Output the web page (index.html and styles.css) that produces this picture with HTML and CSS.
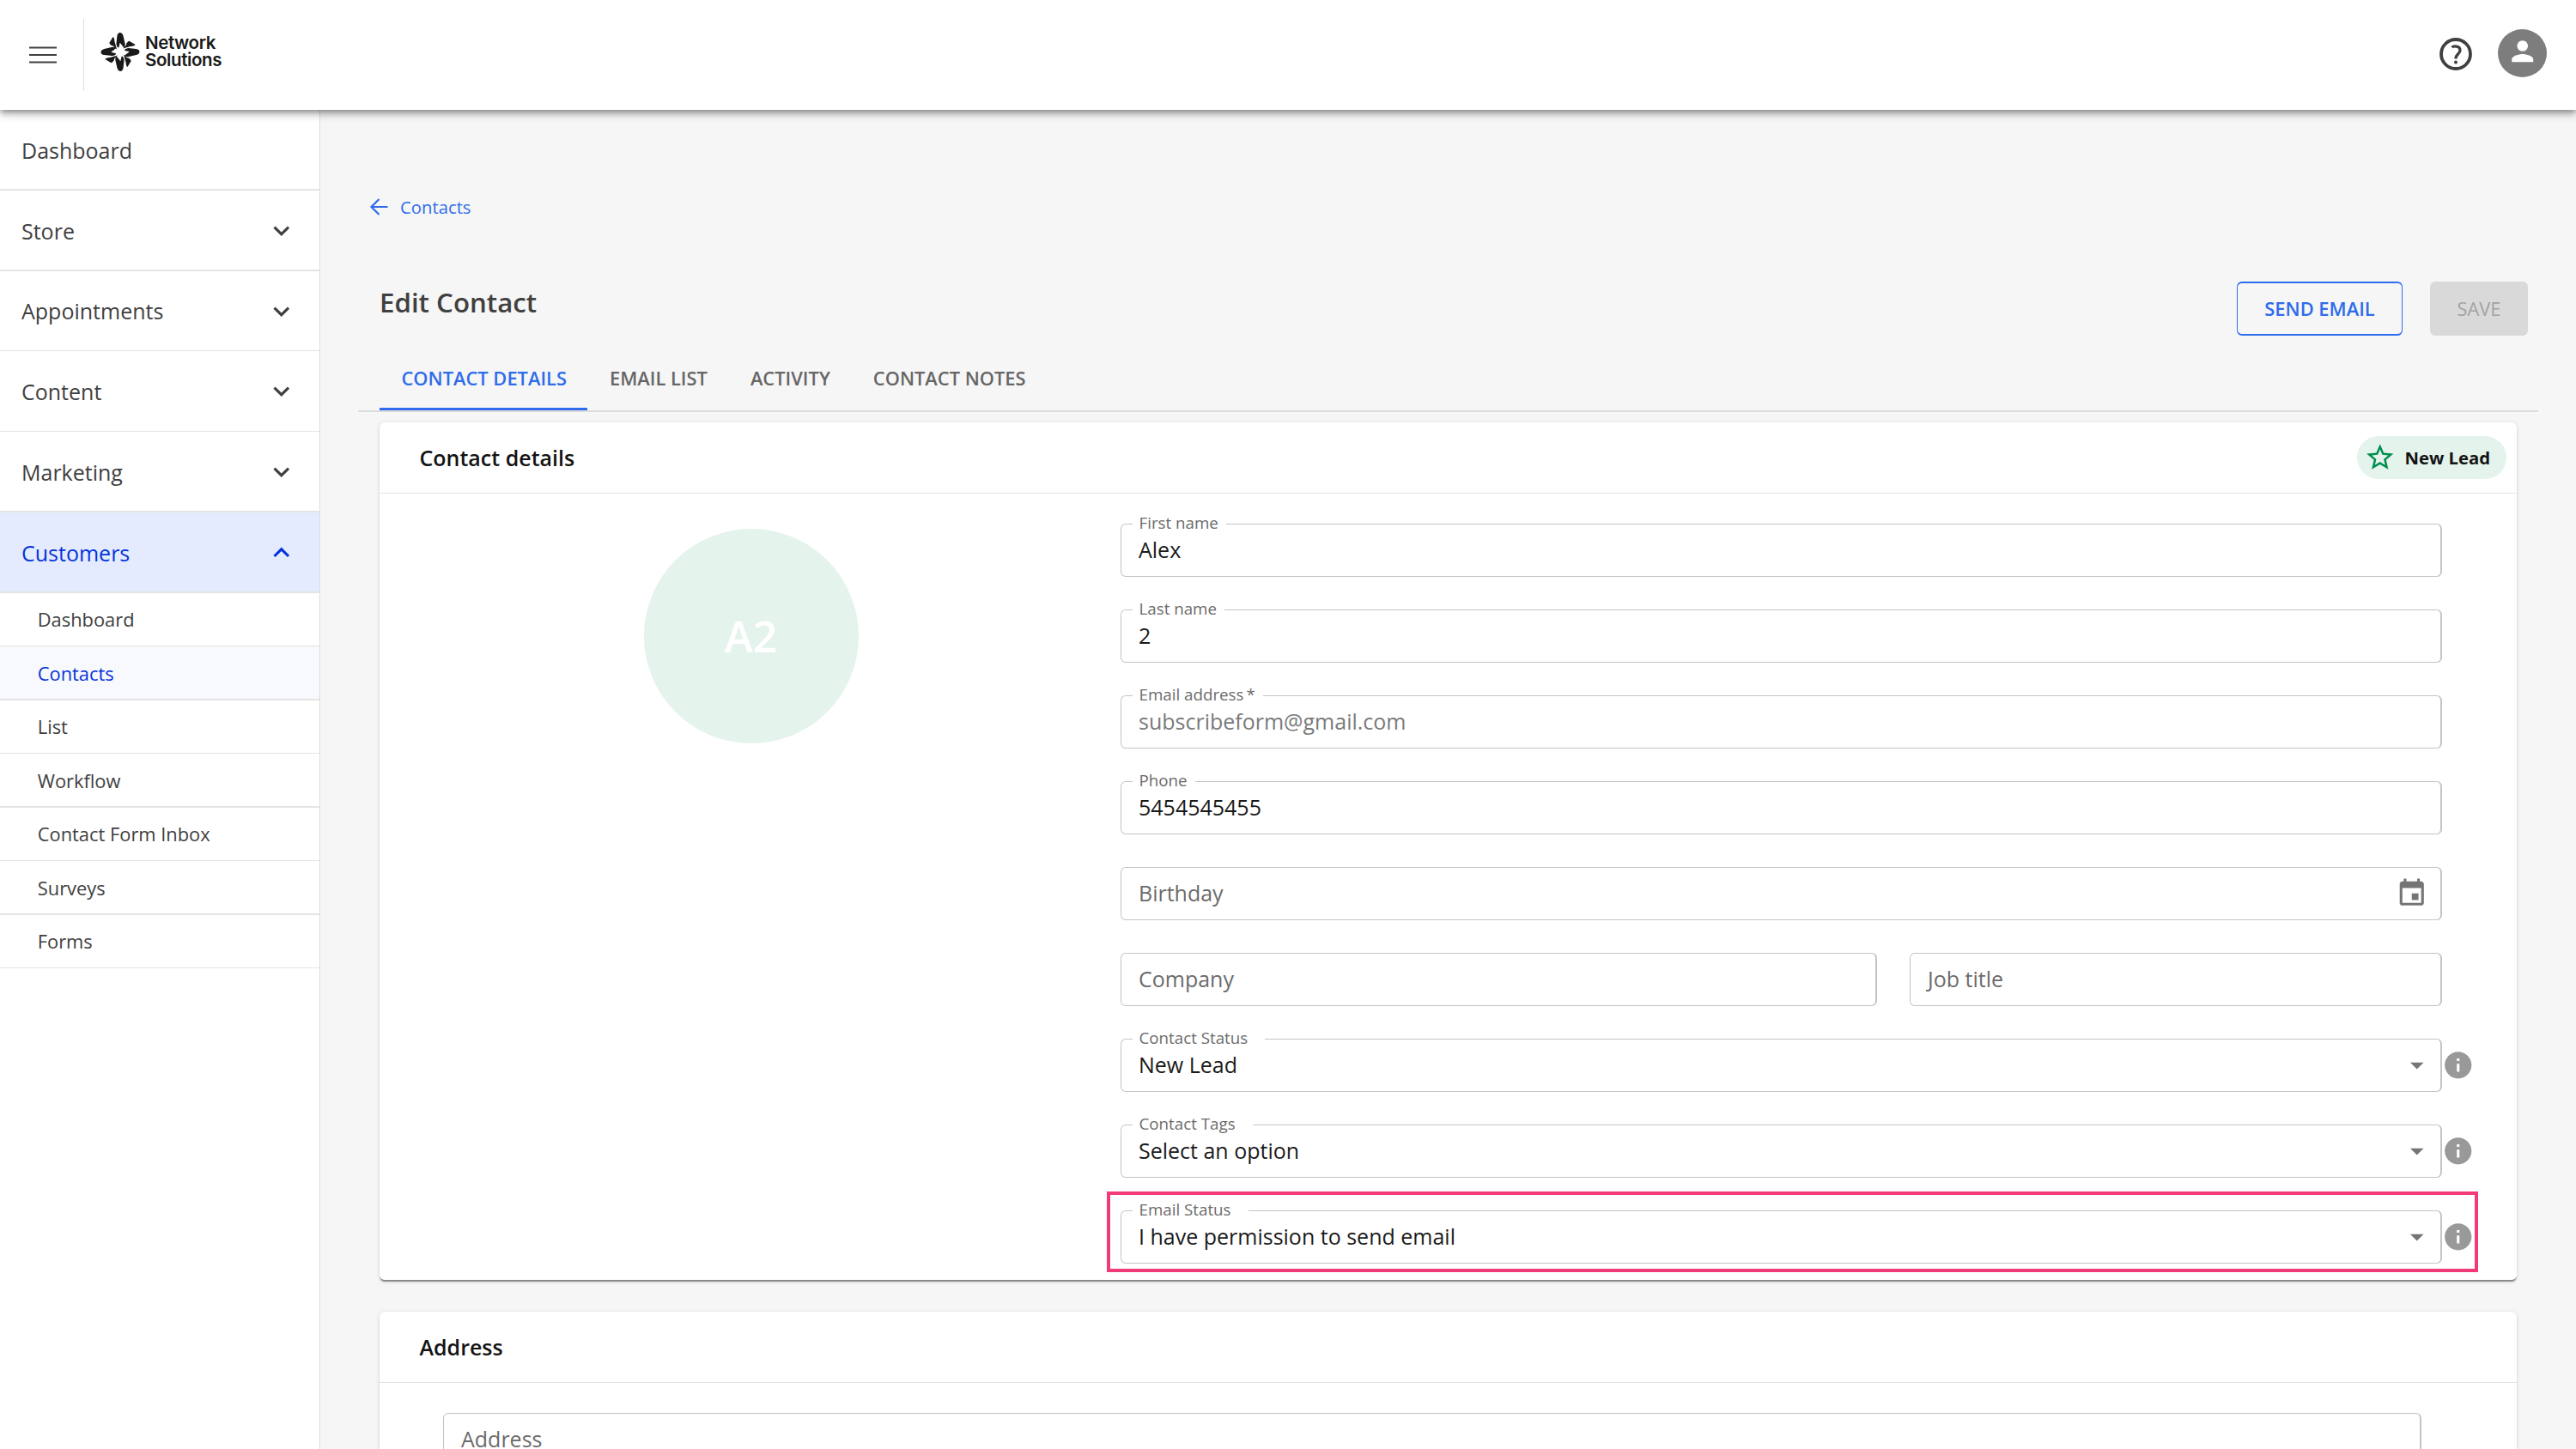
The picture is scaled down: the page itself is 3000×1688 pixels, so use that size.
FILE: index.html
```html
<!DOCTYPE html>
<html lang="en">
<head>
    <meta charset="UTF-8">
    <meta name="viewport" content="width=device-width, initial-scale=1.0">
    <title>Edit Contact</title>
    <link rel="stylesheet" href="styles.css">
</head>
<body>
    <header class="topbar">
        <button class="menu-btn" aria-label="Menu">
            <svg viewBox="0 0 32 20"><path d="M0 1.5h32M0 10h32M0 18.5h32" stroke="#404040" stroke-width="2" fill="none"/></svg>
        </button>
        <div class="brand">
            <svg class="brand-mark" viewBox="0 0 138 138">
                <defs>
                    <g id="petals">
                        <path d="M58 12C60-4 76-4 80 12L86 38Q88 50 82 54L68 36L64 54Q57 54 55 40Z"/>
                        <path d="M43 15Q48 17 49 32L57 60L45 48Q34 47 30 37Z"/>
                    </g>
                </defs>
                <g fill="#1a1a1a">
                    <use href="#petals"/>
                    <use href="#petals" transform="rotate(90 69 69)"/>
                    <use href="#petals" transform="rotate(180 69 69)"/>
                    <use href="#petals" transform="rotate(270 69 69)"/>
                </g>
            </svg>
            <div class="brand-name">Network<br>Solutions</div>
        </div>
        <div class="topbar-actions">
            <svg class="help-icon" viewBox="0 0 38 38"><circle cx="19" cy="19" r="17" fill="none" stroke="#404040" stroke-width="3.8"/><path d="M14.5 11.2c1.6-1.6 9.500-2.400 9.500 3.200 0 4.800-5.200 4.600-5.200 10.200" fill="none" stroke="#404040" stroke-width="3.300"/><circle cx="19" cy="28.600" r="2" fill="#404040"/></svg>
            <div class="user">
                <svg viewBox="0 0 24 24"><path fill="#fff" d="M12 12c2.210 0 4-1.790 4-4s-1.790-4-4-4-4 1.790-4 4 1.790 4 4 4zm0 2c-2.670 0-8 1.340-8 4v2h16v-2c0-2.660-5.330-4-8-4z"/></svg>
            </div>
        </div>
    </header>

    <div class="layout">
        <nav class="sidebar">
            <ul class="nav">
                <li><a class="nav-link">Dashboard</a></li>
                <li><a class="nav-link">Store <svg class="chevron" viewBox="0 0 24 24"><path d="M16.590 8.590 12 13.170 7.410 8.590 6 10l6 6 6-6z"/></svg></a></li>
                <li><a class="nav-link">Appointments <svg class="chevron" viewBox="0 0 24 24"><path d="M16.590 8.590 12 13.170 7.410 8.590 6 10l6 6 6-6z"/></svg></a></li>
                <li><a class="nav-link">Content <svg class="chevron" viewBox="0 0 24 24"><path d="M16.590 8.590 12 13.170 7.410 8.590 6 10l6 6 6-6z"/></svg></a></li>
                <li><a class="nav-link">Marketing <svg class="chevron" viewBox="0 0 24 24"><path d="M16.590 8.590 12 13.170 7.410 8.590 6 10l6 6 6-6z"/></svg></a></li>
                <li><a class="nav-link open">Customers <svg class="chevron" viewBox="0 0 24 24"><path d="M12 8l-6 6 1.410 1.410L12 10.830l4.590 4.580L18 14z"/></svg></a></li>
            </ul>
            <ul class="nav subnav">
                <li><a class="nav-link">Dashboard</a></li>
                <li><a class="nav-link active">Contacts</a></li>
                <li><a class="nav-link">List</a></li>
                <li><a class="nav-link">Workflow</a></li>
                <li><a class="nav-link">Contact Form Inbox</a></li>
                <li><a class="nav-link">Surveys</a></li>
                <li><a class="nav-link">Forms</a></li>
            </ul>
        </nav>

        <main class="content">
            <a class="back-link">
                <svg viewBox="0 0 21 20"><path d="M21 10H2M11 1L2 10l9 9" fill="none" stroke="currentColor" stroke-width="2.200"/></svg>
                Contacts
            </a>

            <div class="page-head">
                <h1>Edit Contact</h1>
                <div class="page-actions">
                    <button class="btn btn-outline">SEND EMAIL</button>
                    <button class="btn btn-disabled" disabled>SAVE</button>
                </div>
            </div>

            <div class="tabs">
                <a class="tab selected">CONTACT DETAILS</a>
                <a class="tab">EMAIL LIST</a>
                <a class="tab">ACTIVITY</a>
                <a class="tab">CONTACT NOTES</a>
            </div>

            <section class="card details">
                <div class="card-head">
                    <h2>Contact details</h2>
                    <div class="badge">
                        <svg viewBox="0 0 24 24"><path d="M22 9.240l-7.190-.62L12 2 9.190 8.630 2 9.240l5.460 4.730L5.820 21 12 17.270 18.180 21l-1.630-7.030L22 9.240zM12 15.400l-3.760 2.270 1-4.280-3.320-2.880 4.380-.38L12 6.100l1.710 4.040 4.380.38-3.320 2.880 1 4.280L12 15.400z"/></svg>
                        New Lead
                    </div>
                </div>
                <div class="card-body">
                    <div class="photo">
                        <div class="initials">A2</div>
                    </div>
                    <div class="fields">
                        <div class="field"><label>First name</label><span class="value">Alex</span></div>
                        <div class="field"><label>Last name</label><span class="value">2</span></div>
                        <div class="field"><label>Email address<span class="required">*</span></label><span class="value muted">subscribeform@gmail.com</span></div>
                        <div class="field"><label>Phone</label><span class="value">5454545455</span></div>
                        <div class="field">
                            <span class="value placeholder">Birthday</span>
                            <svg class="calendar" viewBox="0 0 24 24"><path d="M17 12h-5v5h5v-5zM16 1v2H8V1H6v2H5c-1.110 0-1.990.9-1.990 2L3 19c0 1.100.89 2 2 2h14c1.100 0 2-.9 2-2V5c0-1.100-.9-2-2-2h-1V1h-2zm3 18H5V8h14v11z"/></svg>
                        </div>
                        <div class="field-row">
                            <div class="field company"><span class="value placeholder">Company</span></div>
                            <div class="field job"><span class="value placeholder">Job title</span></div>
                        </div>
                        <div class="select-row">
                            <div class="field select"><label>Contact Status</label><span class="value">New Lead</span><svg class="arrow" viewBox="0 0 24 24"><path d="M7 10l5 5 5-5z"/></svg></div>
                            <svg class="info" viewBox="0 0 24 24"><path d="M12 2C6.480 2 2 6.480 2 12s4.480 10 10 10 10-4.480 10-10S17.520 2 12 2zm1 15h-2v-6h2v6zm0-8h-2V7h2v2z"/></svg>
                        </div>
                        <div class="select-row">
                            <div class="field select"><label>Contact Tags</label><span class="value">Select an option</span><svg class="arrow" viewBox="0 0 24 24"><path d="M7 10l5 5 5-5z"/></svg></div>
                            <svg class="info" viewBox="0 0 24 24"><path d="M12 2C6.480 2 2 6.480 2 12s4.480 10 10 10 10-4.480 10-10S17.520 2 12 2zm1 15h-2v-6h2v6zm0-8h-2V7h2v2z"/></svg>
                        </div>
                        <div class="select-row highlighted">
                            <div class="field select"><label>Email Status</label><span class="value">I have permission to send email</span><svg class="arrow" viewBox="0 0 24 24"><path d="M7 10l5 5 5-5z"/></svg></div>
                            <svg class="info" viewBox="0 0 24 24"><path d="M12 2C6.480 2 2 6.480 2 12s4.480 10 10 10 10-4.480 10-10S17.520 2 12 2zm1 15h-2v-6h2v6zm0-8h-2V7h2v2z"/></svg>
                        </div>
                    </div>
                </div>
            </section>

            <section class="card address">
                <div class="card-head">
                    <h2>Address</h2>
                </div>
                <div class="address-body">
                    <div class="field"><span class="value placeholder">Address</span></div>
                </div>
            </section>
        </main>
    </div>
</body>
</html>
```

FILE: styles.css
```css
*, *::after {
    box-sizing: border-box;
}
body {
    margin: 0;
    height: 1688px;
    overflow: hidden;
    font-family: 'Open Sans', 'Noto Sans', sans-serif;
    font-size: 25px;
    color: #404040;
    background-color: #f6f6f6;
}
h1, h2, ul {
    margin: 0;
    padding: 0;
}
svg {
    display: block;
    flex: none;
}

/* top bar */
.topbar {
    position: relative;
    z-index: 2;
    display: flex;
    align-items: center;
    height: 128px;
    background-color: #fff;
    box-shadow: 0 3px 6px -1px rgba(0, 0, 0, 0.3), 0 6px 8px rgba(0, 0, 0, 0.16), 0 2px 14px rgba(0, 0, 0, 0.12);
}
.menu-btn {
    width: 98px;
    height: 84px;
    padding: 0 0 0 34px;
    border: none;
    border-right: 1px solid #e0e0e0;
    background: none;
}
.menu-btn svg {
    width: 32px;
    height: 20px;
}
.brand {
    display: flex;
    align-items: center;
    gap: 6px;
    padding: 0 0 8px 19px;
}
.brand-mark {
    width: 46px;
    height: 45px;
}
.brand-name {
    font-family: Inter, 'Liberation Sans', sans-serif;
    font-size: 20.5px;
    font-weight: 600;
    line-height: 20px;
    letter-spacing: -0.4px;
    color: #1a1a1a;
}
.topbar-actions {
    display: flex;
    align-items: center;
    gap: 30px;
    margin-left: auto;
    padding: 0 34px 5px 0;
}
.help-icon {
    width: 38px;
    height: 38px;
    margin-top: 2px;
}
.user {
    display: flex;
    align-items: center;
    justify-content: center;
    width: 57px;
    height: 56px;
    border-radius: 50%;
    background-color: #7d7d7d;
}
.user svg {
    width: 37.5px;
    height: 37.5px;
    margin-bottom: 3px;
}

/* sidebar */
.layout {
    display: flex;
    height: 1560px;
    overflow: hidden;
}
.sidebar {
    width: 373px;
    padding-top: 0.125px;
    background-color: #fff;
    border-right: 1px solid #dcdcdc;
}
.nav {
    list-style: none;
}
.nav li::after {
    content: '';
    display: block;
    height: 1.5625px;
    background-color: #e4e4e4;
}
.nav-link {
    display: flex;
    align-items: center;
    justify-content: space-between;
    height: 92.1875px;
    padding: 1.5px 26px 0 25px;
}
.nav-link.open {
    color: #0433d9;
    background-color: #e5ebff;
}
.chevron {
    width: 37.5px;
    height: 37.5px;
    fill: currentColor;
}
.subnav .nav-link {
    height: 60.9375px;
    padding-top: 1px;
    padding-left: 43.75px;
    font-size: 21.875px;
}
.subnav .nav-link.active {
    color: #0433d9;
    background-color: #f8f9fc;
}

/* page header */
.content {
    flex: 1;
    padding: 96px 44px 0;
}
.back-link {
    display: flex;
    align-items: center;
    gap: 14px;
    height: 34px;
    padding-left: 13px;
    font-size: 20.3px;
    color: #2f6ceb;
}
.back-link svg {
    width: 22px;
    height: 20px;
    margin-bottom: 1px;
}
.page-head {
    display: flex;
    justify-content: space-between;
    margin: 70px 12px 0 25px;
}
.page-head h1 {
    margin-top: 2px;
    font-size: 31.25px;
    font-weight: 600;
    line-height: 44px;
}
.page-actions {
    display: flex;
    gap: 32px;
}
.btn {
    height: 63px;
    padding: 0;
    border: none;
    border-radius: 6px;
    font-family: inherit;
    font-size: 21.875px;
    font-weight: 600;
}
.btn-outline {
    width: 193px;
    border: 2px solid #2f6ceb;
    border-width: 2px 1px;
    background: none;
    color: #2f6ceb;
}
.btn-disabled {
    width: 114px;
    background-color: #d9d9d9;
    color: #a3a3a3;
    font-weight: 400;
}
.tabs {
    display: flex;
    height: 89px;
    padding-left: 25px;
    border-bottom: 2px solid #dcdcdc;
}
.tab {
    height: 87px;
    padding: 34px 24.5px 0 25.5px;
    font-size: 21.875px;
    font-weight: 600;
    line-height: 32px;
    color: #666;
}
.tab.selected {
    color: #2f6ceb;
    border-bottom: 3px solid #2f6ceb;
}

/* cards */
.card {
    margin: 0 25px;
    border-radius: 6px;
    background-color: #fff;
    box-shadow: 0 3px 1px -1.5px rgba(0, 0, 0, 0.3), 0 1.5px 1.5px rgba(0, 0, 0, 0.14), 0 1.5px 5px rgba(0, 0, 0, 0.12);
}
.details {
    height: 999px;
    margin-top: 12px;
}
.address {
    height: 400px;
    margin-top: 37px;
}
.card-head {
    display: flex;
    align-items: center;
    justify-content: space-between;
    height: 83px;
    padding: 0 12px 0 46.5px;
    border-bottom: 1px solid #e2e2e2;
}
.card-head h2 {
    font-size: 25px;
    font-weight: 600;
    color: #141414;
}
.badge {
    display: flex;
    align-items: center;
    gap: 10px;
    width: 174px;
    height: 50px;
    padding-left: 8px;
    border-radius: 25px;
    font-size: 20.3px;
    font-weight: 700;
    color: #141414;
    background-color: #e4f3ec;
}
.badge svg {
    width: 37.5px;
    height: 37.5px;
    fill: #008f4c;
}
.card-body {
    display: flex;
    padding-top: 35px;
}
.photo {
    width: 863px;
    padding: 6px 0 0 2px;
}
.initials {
    width: 250px;
    height: 250px;
    margin: 0 auto;
    border-radius: 50%;
    text-align: center;
    font-size: 50px;
    font-weight: 600;
    line-height: 250px;
    color: #fff;
    background-color: #e4f3ec;
}

/* form fields */
.fields {
    display: flex;
    flex-direction: column;
    gap: 38px;
    width: 1539px;
}
.field {
    position: relative;
    display: flex;
    align-items: center;
    height: 62px;
    padding-left: 20px;
    border: 1px solid #c4c4c4;
    border-right-width: 2px;
    border-radius: 6px;
}
.field label {
    position: absolute;
    top: -15px;
    left: 13px;
    padding: 0 9px 0 7.5px;
    font-size: 18.75px;
    line-height: 26px;
    color: #6b6b6b;
    background-color: #fff;
}
.required {
    margin-left: 3px;
}
.value {
    line-height: 34px;
    margin-bottom: 2px;
    color: #1a1a1a;
}
.value.muted {
    color: #7a7a7a;
}
.value.placeholder {
    color: #6b6b6b;
}
.calendar {
    width: 37.5px;
    height: 37.5px;
    margin: 0 15px 0 auto;
    fill: #757575;
}
.field-row {
    display: flex;
    gap: 38px;
}
.company {
    width: 881px;
}
.job {
    width: 620px;
}
.select-row {
    position: relative;
    display: flex;
    align-items: center;
    width: 1577px;
}
.select {
    width: 1539px;
}
.select label {
    padding-right: 20px;
}
.arrow {
    width: 37.5px;
    height: 37.5px;
    margin: 0 9px 0 auto;
    fill: #757575;
}
.info {
    width: 37.5px;
    height: 37.5px;
    fill: #999;
}
/* frame round the highlighted row */
.highlighted::after {
    content: '';
    position: absolute;
    top: -22px;
    left: -16px;
    width: 1597px;
    height: 94px;
    border: 4px solid #f03b78;
}
.address-body {
    padding: 35px 111px 0 74px;
}
```
